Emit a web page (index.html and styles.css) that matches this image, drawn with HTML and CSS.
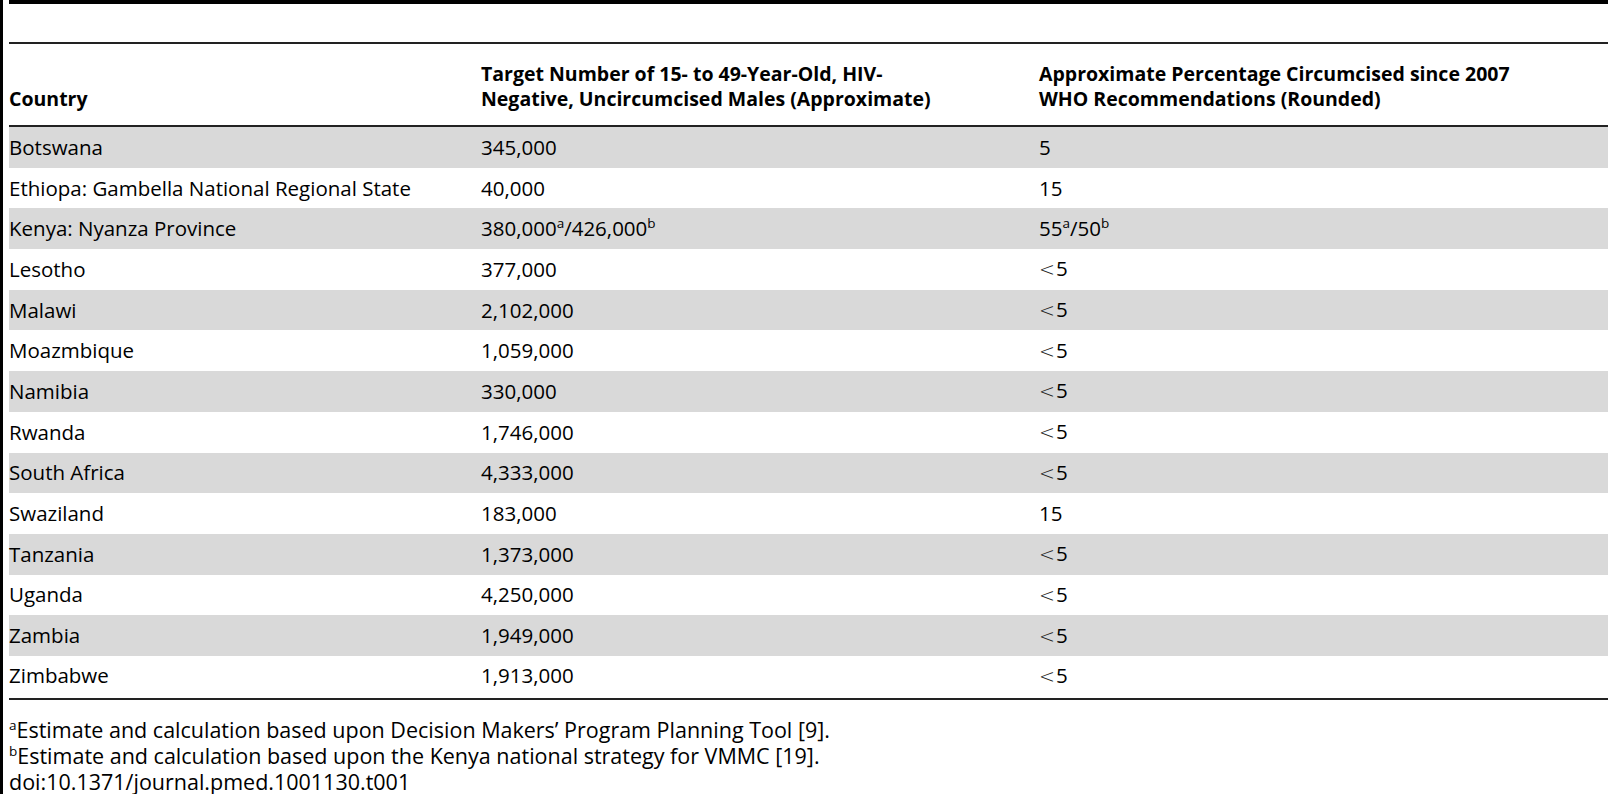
FILE: index.html
```html
<!DOCTYPE html>
<html lang="en">

<head>
    <meta charset="UTF-8">
    <title>Table 1 - VMMC targets</title>
    <link rel="stylesheet" href="styles.css">
</head>

<body>

    <div class="page">
        <!-- Caption area -->
        <div class="caption-rule"></div>

        <table class="data-table">
            <colgroup>
                <col class="col-country">
                <col class="col-target">
                <col class="col-percent">
            </colgroup>
            <thead>
                <tr>
                    <th>Country</th>
                    <th>Target Number of 15- to 49-Year-Old, HIV-<br>Negative, Uncircumcised Males (Approximate)</th>
                    <th>Approximate Percentage Circumcised since 2007<br>WHO Recommendations (Rounded)</th>
                </tr>
            </thead>
            <tbody>
                <tr><td>Botswana</td><td>345,000</td><td>5</td></tr>
                <tr><td>Ethiopa: Gambella National Regional State</td><td>40,000</td><td>15</td></tr>
                <tr><td>Kenya: Nyanza Province</td><td>380,000<sup>a</sup>/426,000<sup>b</sup></td><td>55<sup>a</sup>/50<sup>b</sup></td></tr>
                <tr><td>Lesotho</td><td>377,000</td><td><span class="lt">&lt;</span>5</td></tr>
                <tr><td>Malawi</td><td>2,102,000</td><td><span class="lt">&lt;</span>5</td></tr>
                <tr><td>Moazmbique</td><td>1,059,000</td><td><span class="lt">&lt;</span>5</td></tr>
                <tr><td>Namibia</td><td>330,000</td><td><span class="lt">&lt;</span>5</td></tr>
                <tr><td>Rwanda</td><td>1,746,000</td><td><span class="lt">&lt;</span>5</td></tr>
                <tr><td>South Africa</td><td>4,333,000</td><td><span class="lt">&lt;</span>5</td></tr>
                <tr><td>Swaziland</td><td>183,000</td><td>15</td></tr>
                <tr><td>Tanzania</td><td>1,373,000</td><td><span class="lt">&lt;</span>5</td></tr>
                <tr><td>Uganda</td><td>4,250,000</td><td><span class="lt">&lt;</span>5</td></tr>
                <tr><td>Zambia</td><td>1,949,000</td><td><span class="lt">&lt;</span>5</td></tr>
                <tr class="last-row"><td>Zimbabwe</td><td>1,913,000</td><td><span class="lt">&lt;</span>5</td></tr>
            </tbody>
        </table>

        <!-- Footnotes -->
        <div class="footnotes">
            <p><sup>a</sup>Estimate and calculation based upon Decision Makers’ Program Planning Tool [9].</p>
            <p><sup>b</sup>Estimate and calculation based upon the Kenya national strategy for VMMC [19].</p>
            <p>doi:10.1371/journal.pmed.1001130.t001</p>
        </div>
    </div>

</body>

</html>
```

FILE: styles.css
```css
body {
    margin: 0;
    padding: 0;
    background-color: #fff;
    color: #000;
    font-family: "Open Sans", "Noto Sans", sans-serif;
    font-size: 20.5px;
}

/* Outer frame with the black bar on the left */
.page {
    height: 794px;
    border-left: 3px solid #000;
    padding-left: 6px;
    box-sizing: border-box;
}

.caption-rule {
    height: 38px;
    border-top: 4px solid #000;
    border-bottom: 2px solid #222;
}

/* Table */
.data-table {
    width: 100%;
    border-collapse: separate;
    border-spacing: 0;
}

.col-country {
    width: 472px;
}

.col-target {
    width: 558px;
}

.data-table th {
    text-align: left;
    vertical-align: bottom;
    font-weight: 700;
    font-size: 19.5px;
    line-height: 25px;
    height: 83px;
    padding: 0 0 14px 0;
    box-sizing: border-box;
    border-bottom: 2px solid #222;
    white-space: nowrap;
}

.data-table tbody tr {
    height: 40.7px;
}

.data-table td {
    line-height: 25px;
    padding: 0;
    vertical-align: middle;
    white-space: nowrap;
}

.data-table tbody tr:nth-child(odd) td {
    background-color: #d9d9d9;
}

.data-table tbody .last-row td {
    height: 44px;
    padding-bottom: 2px;
    box-sizing: border-box;
    border-bottom: 2px solid #222;
}

sup {
    font-size: 13.5px;
    line-height: 0;
    vertical-align: 8px;
}

.lt {
    font-family: "DejaVu Sans", sans-serif;
    font-weight: 200;
    font-size: 19px;
    color: #222;
    margin-right: 1px;
}

/* Footnotes */
.footnotes {
    margin-top: 17px;
    font-size: 21.5px;
    line-height: 26px;
}

.footnotes p {
    margin: 0;
}
```
